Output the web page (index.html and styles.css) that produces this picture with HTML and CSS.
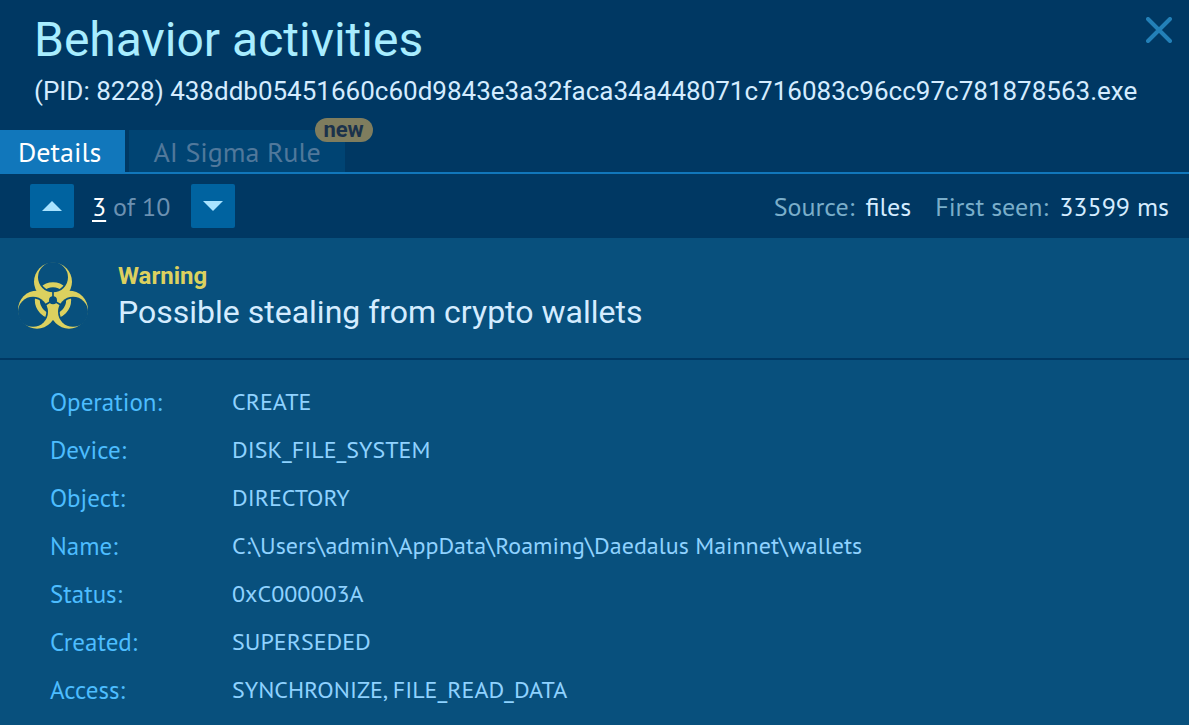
FILE: index.html
```
<!DOCTYPE html>
<html lang="en">
<head>
<meta charset="utf-8">
<meta name="viewport" content="width=device-width, initial-scale=1">
<title>Behavior activities</title>
<link rel="stylesheet" href="styles.css">
</head>
<body>
<header class="header">
  <div class="header-text">
    <h1 class="title">Behavior activities</h1>
    <p class="process">(PID: 8228) 438ddb05451660c60d9843e3a32faca34a448071c716083c96cc97c781878563.exe</p>
  </div>
  <button class="close" type="button" aria-label="Close">
    <svg width="26" height="26" viewBox="0 0 26 26" aria-hidden="true"><path d="M2 2 24 24M24 2 2 24" fill="none" stroke="currentColor" stroke-width="4" stroke-linecap="round"/></svg>
  </button>
</header>
<nav class="tabs">
  <button class="tab tab-active" type="button">Details</button>
  <button class="tab tab-muted" type="button">AI Sigma Rule<span class="badge">new</span></button>
</nav>
<div class="toolbar">
  <button class="step" type="button" aria-label="Previous">
    <svg width="20" height="10" viewBox="0 0 20 10" aria-hidden="true"><path d="M0 10 10 0 20 10Z" fill="currentColor"/></svg>
  </button>
  <span class="count"><a class="current" href="#current">3</a> of 10</span>
  <button class="step" type="button" aria-label="Next">
    <svg width="20" height="10" viewBox="0 0 20 10" aria-hidden="true"><path d="M0 0 10 10 20 0Z" fill="currentColor"/></svg>
  </button>
  <div class="meta">
    <span class="meta-item"><span class="meta-label">Source:</span><span>files</span></span>
    <span class="meta-item"><span class="meta-label">First seen:</span><span>33599 ms</span></span>
  </div>
</div>
<main class="content">
  <section class="alert">
    <svg class="hazard" width="70" height="67" viewBox="54 37 210 201" aria-hidden="true">
      <defs>
        <mask id="horns" maskUnits="userSpaceOnUse" x="40" y="20" width="240" height="230">
          <rect x="40" y="20" width="240" height="230" fill="#fff"/>
          <g fill="#000">
            <circle cx="159" cy="83" r="45"/>
            <circle cx="99" cy="186.500" r="45"/>
            <circle cx="219" cy="186.500" r="45"/>
            <circle cx="159" cy="152" r="12"/>
          </g>
          <path d="M159 152V118M159 152 130 169M159 152 188 169" stroke="#000" stroke-width="5"/>
        </mask>
        <clipPath id="gaps">
          <circle cx="159" cy="83" r="40"/>
          <circle cx="99" cy="186.500" r="40"/>
          <circle cx="219" cy="186.500" r="40"/>
        </clipPath>
      </defs>
      <g fill="currentColor" mask="url(#horns)">
        <circle cx="159" cy="96" r="57"/>
        <circle cx="111" cy="180" r="57"/>
        <circle cx="207" cy="180" r="57"/>
      </g>
      <circle cx="159" cy="152" r="47" fill="none" stroke="currentColor" stroke-width="15" clip-path="url(#gaps)"/>
    </svg>
    <div>
      <p class="severity">Warning</p>
      <h2 class="summary">Possible stealing from crypto wallets</h2>
    </div>
  </section>
  <dl class="details">
    <dt>Operation:</dt><dd>CREATE</dd>
    <dt>Device:</dt><dd>DISK_FILE_SYSTEM</dd>
    <dt>Object:</dt><dd>DIRECTORY</dd>
    <dt>Name:</dt><dd>C:\Users\admin\AppData\Roaming\Daedalus Mainnet\wallets</dd>
    <dt>Status:</dt><dd>0xC000003A</dd>
    <dt>Created:</dt><dd>SUPERSEDED</dd>
    <dt>Access:</dt><dd>SYNCHRONIZE, FILE_READ_DATA</dd>
  </dl>
</main>
</body>
</html>
```
FILE: styles.css
```
* {
  box-sizing: border-box;
}

body {
  display: flex;
  flex-direction: column;
  min-height: 100vh;
  margin: 0;
  background: #003863;
  color: #d4ecff;
  font-family: "PT Sans", Lato, sans-serif;
  font-size: 26px;
}

h1, h2, p, dl, dd {
  margin: 0;
  font-weight: 400;
}

button {
  padding: 0;
  border: 0;
  font: inherit;
}

.header {
  display: flex;
  justify-content: space-between;
  align-items: flex-start;
  padding: 12px 17px 24px 34px;
  font-family: Roboto, sans-serif;
}

.title {
  color: #a8edff;
  font-size: 48px;
  line-height: 56px;
}

.process {
  padding-top: 8px;
  font-size: 26px;
  line-height: 30px;
}

.close {
  flex: none;
  display: flex;
  margin-top: 5px;
  background: none;
  color: #2380b8;
}

.tabs {
  display: flex;
  gap: 4px;
  border-bottom: 2px solid #1177bb;
}

.tab {
  position: relative;
  height: 42px;
  padding: 0 24px;
  font-size: 28px;
  line-height: 44px;
}

.tab-active {
  padding-left: 18px;
  background: #1177bb;
  color: #fff;
}

.tab-muted {
  background: #004473;
  color: #50789b;
}

.badge {
  position: absolute;
  top: -12px;
  right: -28px;
  padding: 0 9px 0 8px;
  border-radius: 12px;
  background: #7f7d5e;
  color: #1b324b;
  font: 700 22px/24px Roboto, sans-serif;
}

.toolbar {
  display: flex;
  align-items: center;
  gap: 18px;
  padding: 10px 20px 10px 30px;
}

.step {
  display: flex;
  justify-content: center;
  align-items: center;
  width: 44px;
  height: 44px;
  border-radius: 2px;
  background: #0063a0;
  color: #a8e3ff;
}

.count {
  padding-right: 3px;
  color: #6c91b2;
}

.current {
  color: #fff;
  text-underline-offset: 4px;
}

.meta {
  display: flex;
  gap: 24px;
  margin-left: auto;
}

.meta-item {
  display: flex;
  gap: 11px;
}

.meta-label {
  color: #7aaeca;
}

.content {
  flex: 1;
  background: #08507d;
}

.alert {
  display: flex;
  gap: 30px;
  padding: 24px 18px;
  border-bottom: 2px solid #003863;
  font-family: Roboto, sans-serif;
}

.hazard {
  flex: none;
  color: #dcd15f;
}

.severity {
  color: #dcd15f;
  font-size: 24px;
  font-weight: 700;
  line-height: 28px;
}

.summary {
  font-size: 32px;
  line-height: 44px;
}

.details {
  display: grid;
  grid-template-columns: 182px 1fr;
  padding: 18px 50px 12px;
  color: #8fd2ff;
  font-size: 24px;
  line-height: 48px;
}

.details dt {
  color: #4dbdff;
  font-size: 25px;
}
```
